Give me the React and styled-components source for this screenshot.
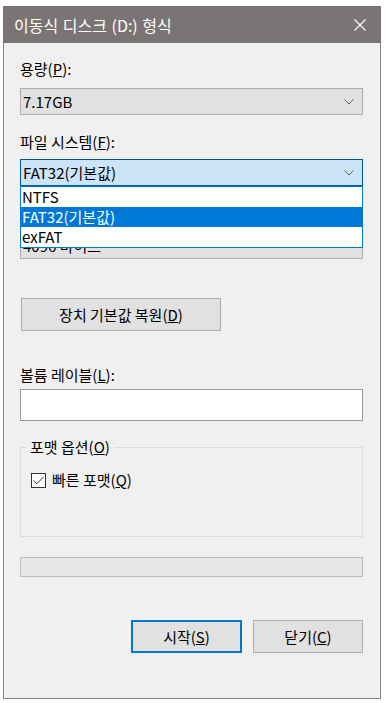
import React from 'react';
import styled, { createGlobalStyle } from 'styled-components';

const GlobalStyle = createGlobalStyle`
  body {
    margin: 0;
    background: #ffffff;
    font-family: "Noto Sans CJK KR", "Noto Sans", sans-serif;
    font-size: 15px;
    color: #000;
  }
`;

// Whole dialog window
const Window = styled.div`
  margin: 6px 0 0 3px;
  width: 378px;
  height: 693px;
  box-sizing: border-box;
  background: #f0f0f0;
  border: 1px solid #838383;
  border-top: none;
  display: flex;
  flex-direction: column;
`;

const TitleBar = styled.div`
  height: 37px;
  margin: 0 -1px;
  background: #7a7574;
  color: #ffffff;
  display: flex;
  align-items: center;
  justify-content: space-between;
  padding: 0 15px 0 11px;
  font-size: 16px;
  word-spacing: 1px;
  line-height: 20px;
`;

const CloseButton = styled.div`
  width: 12px;
  height: 12px;
  display: flex;
`;

const Body = styled.div`
  padding: 0 17px 0 16px;
  display: flex;
  flex-direction: column;
`;

const Label = styled.div`
  margin-top: ${p => p.$top}px;
  line-height: 20px;
  height: 20px;
  white-space: nowrap;
`;

const ComboWrap = styled.div`
  position: relative;
  margin-top: ${p => p.$top}px;
`;

const Combo = styled.div`
  height: 27px;
  box-sizing: border-box;
  border: 1px solid ${p => (p.$open ? '#005499' : '#adadad')};
  background: ${p => (p.$open ? '#cce4f7' : '#e1e1e1')};
  display: flex;
  align-items: center;
  justify-content: space-between;
  padding: 0 8px 0 2px;
  line-height: 20px;
`;

// Open list that lies over the next field
const DropList = styled.div`
  position: absolute;
  top: 100%;
  left: 0;
  right: 0;
  background: #ffffff;
  border: 1px solid #0078d7;
  z-index: 2;
`;

const DropItem = styled.div`
  height: 20px;
  line-height: 20px;
  padding-left: 1px;
  background: ${p => (p.$selected ? '#0078d7' : '#ffffff')};
  color: ${p => (p.$selected ? '#ffffff' : '#000000')};
`;

const Button = styled.div`
  height: 33px;
  box-sizing: border-box;
  width: ${p => p.$width}px;
  border: ${p => (p.$default ? '2px solid #0078d7' : '1px solid #adadad')};
  background: #e1e1e1;
  display: flex;
  align-items: center;
  justify-content: center;
  line-height: 20px;
`;

const RestoreButton = styled(Button)`
  margin-top: 39px;
  margin-left: 1px;
`;

const TextInput = styled.div`
  margin-top: 4px;
  height: 32px;
  box-sizing: border-box;
  border: 1px solid #999999;
  background: #ffffff;
`;

const Group = styled.fieldset`
  margin: 16px 0 0 0;
  padding: 0 5px;
  height: 100px;
  box-sizing: border-box;
  border: 1px solid #dcdcdc;
  min-width: 0;
`;

const Legend = styled.legend`
  padding: 0 4px;
  line-height: 20px;
`;

const CheckRow = styled.div`
  margin: 13px 0 0 5px;
  height: 20px;
  display: flex;
  align-items: center;
  gap: 6px;
  line-height: 20px;
`;

const CheckBox = styled.div`
  width: 15px;
  height: 15px;
  box-sizing: border-box;
  border: 1px solid #333333;
  background: #ffffff;
  display: flex;
  align-items: center;
  justify-content: center;
`;

const Progress = styled.div`
  margin-top: 20px;
  height: 20px;
  box-sizing: border-box;
  border: 1px solid #bcbcbc;
  background: #e6e6e6;
`;

const ButtonRow = styled.div`
  margin-top: 43px;
  display: flex;
  justify-content: flex-end;
  gap: 11px;
`;

const Chevron = () => (
  <svg width="10" height="6" viewBox="0 0 10 6">
    <polyline points="0.5,0.5 5,5 9.5,0.5" fill="none" stroke="#606060" strokeWidth="1" />
  </svg>
);

const App = () => {
  return (
    <>
      <GlobalStyle />
      <Window>
        <TitleBar>
          <span>이동식 디스크 (D:) 형식</span>
          <CloseButton>
            <svg width="12" height="12" viewBox="0 0 12 12">
              <path d="M0.5 0.5 L11.5 11.5 M11.5 0.5 L0.5 11.5" stroke="#ffffff" strokeWidth="1.1" />
            </svg>
          </CloseButton>
        </TitleBar>
        <Body>
          <Label $top={16}>용량(<u>P</u>):</Label>
          <ComboWrap $top={9}>
            <Combo>
              <span>7.17GB</span>
              <Chevron />
            </Combo>
          </ComboWrap>

          <Label $top={17}>파일 시스템(<u>F</u>):</Label>
          <ComboWrap $top={7}>
            <Combo $open>
              <span>FAT32(기본값)</span>
              <Chevron />
            </Combo>
            <DropList>
              <DropItem>NTFS</DropItem>
              <DropItem $selected>FAT32(기본값)</DropItem>
              <DropItem>exFAT</DropItem>
            </DropList>
          </ComboWrap>

          {/* allocation unit combo, mostly hidden under the open list */}
          <ComboWrap $top={46}>
            <Combo>
              <span>4096 바이트</span>
              <Chevron />
            </Combo>
          </ComboWrap>

          <RestoreButton $width={200}>장치 기본값 복원(<u>D</u>)</RestoreButton>

          <Label $top={34}>볼륨 레이블(<u>L</u>):</Label>
          <TextInput />

          <Group>
            <Legend>포맷 옵션(<u>O</u>)</Legend>
            <CheckRow>
              <CheckBox>
                <svg width="11" height="9" viewBox="0 0 11 9">
                  <polyline points="0.5,4.5 3.8,7.8 10.5,1" fill="none" stroke="#333333" strokeWidth="1" />
                </svg>
              </CheckBox>
              <span>빠른 포맷(<u>Q</u>)</span>
            </CheckRow>
          </Group>

          <Progress />

          <ButtonRow>
            <Button $width={111} $default>시작(<u>S</u>)</Button>
            <Button $width={110}>닫기(<u>C</u>)</Button>
          </ButtonRow>
        </Body>
      </Window>
    </>
  );
};

export default App;
